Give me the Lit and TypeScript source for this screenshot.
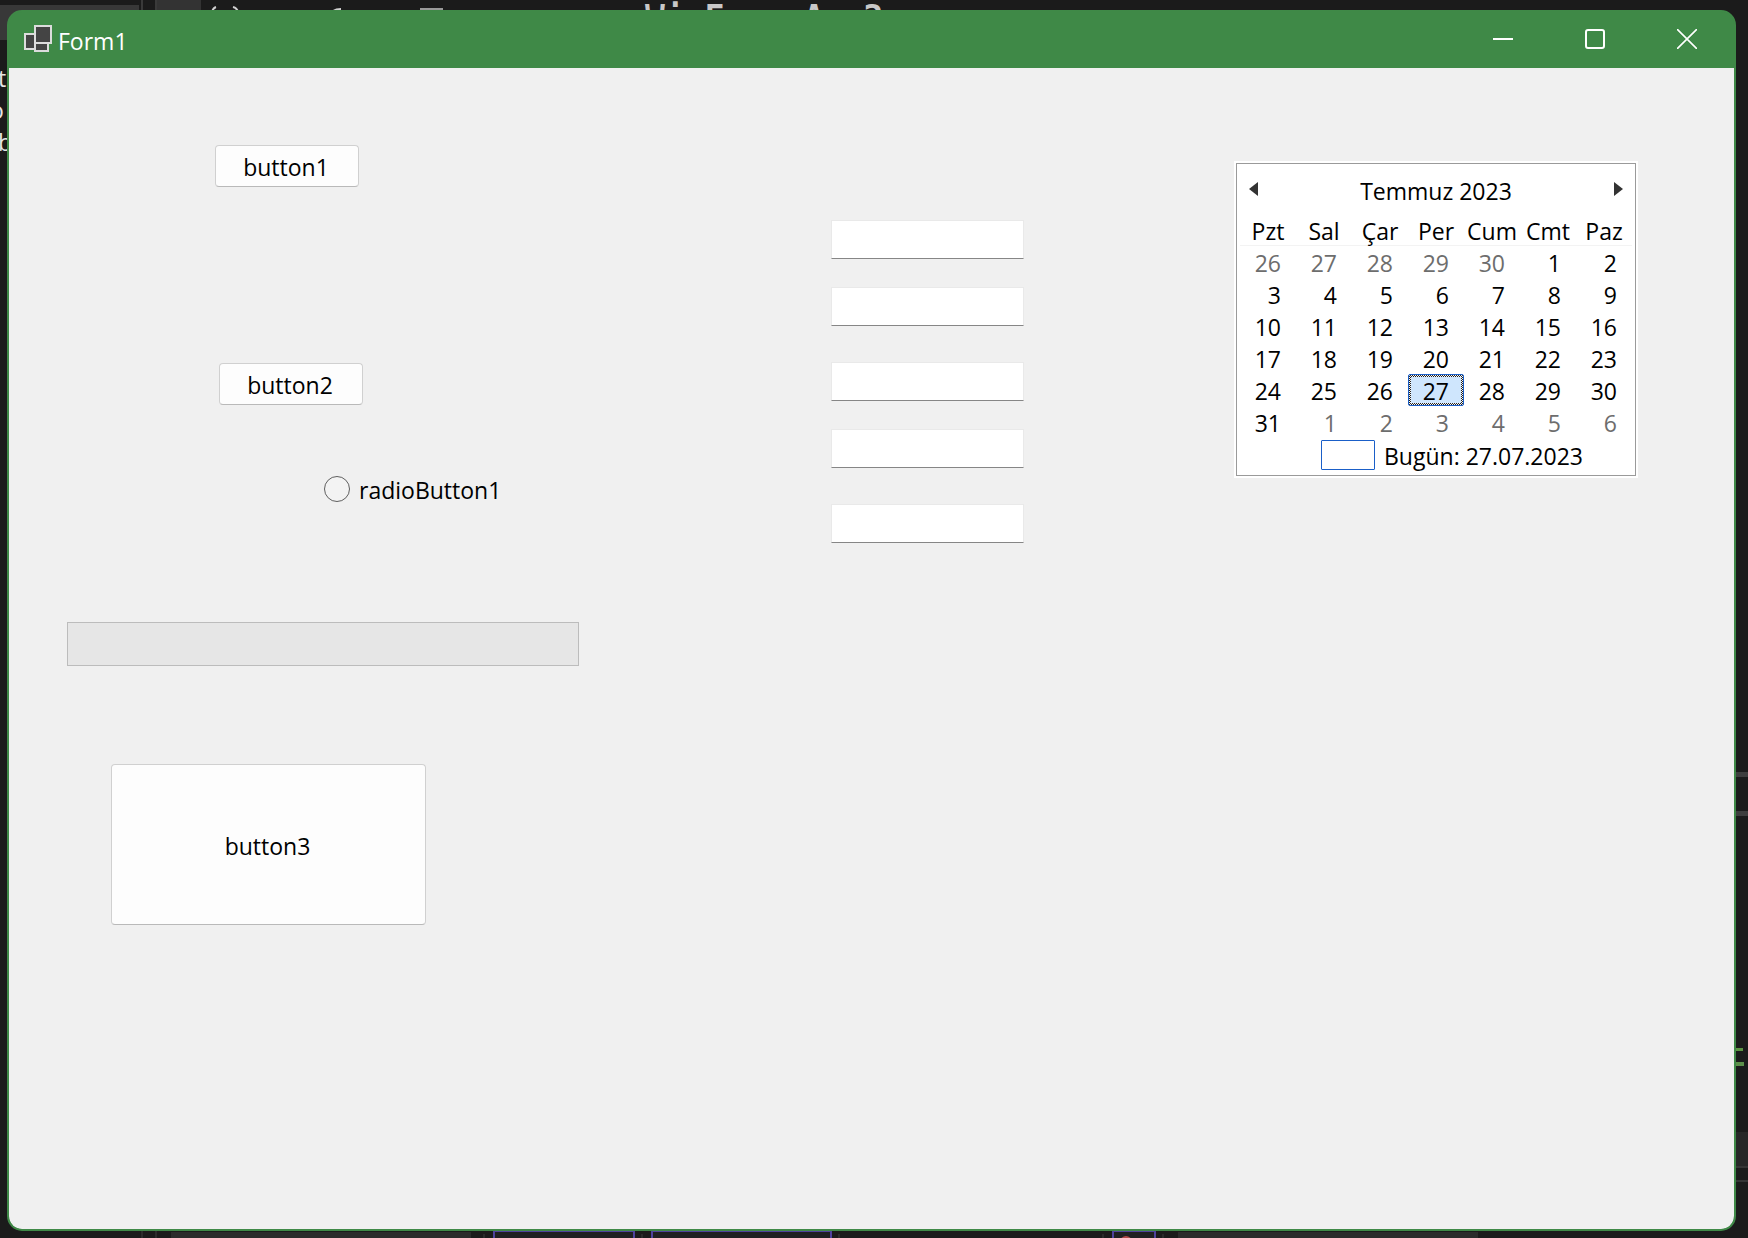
import { LitElement, html, css, svg } from "lit";
import { customElement, state } from "lit/decorators.js";
import { classMap } from "lit/directives/class-map.js";

const WEEKDAYS = ["Pzt", "Sal", "Çar", "Per", "Cum", "Cmt", "Paz"];

interface Day {
  day: number;
  outside: boolean;
}

/** Six weeks of July 2023, Monday first, padded with the neighbouring months. */
function buildWeeks(): Day[][] {
  const weeks: Day[][] = [];
  for (let w = 0; w < 6; w++) {
    const week: Day[] = [];
    for (let d = 0; d < 7; d++) {
      const date = new Date(2023, 5, 26 + w * 7 + d);
      week.push({ day: date.getDate(), outside: date.getMonth() !== 6 });
    }
    weeks.push(week);
  }
  return weeks;
}

@customElement("month-calendar")
class MonthCalendar extends LitElement {
  @state() private selected = 27;
  private weeks = buildWeeks();

  static styles = css`
    :host {
      display: block;
      background: #fff;
      padding: 2px;
    }
    button {
      font: inherit;
      color: inherit;
      background: none;
      border: 0;
      padding: 0;
      margin: 0;
    }
    .frame {
      box-sizing: border-box;
      width: 400px;
      border: 1px solid #9a9a9a;
      padding: 7px 3px 4px;
    }
    .head {
      box-sizing: border-box;
      display: flex;
      align-items: center;
      justify-content: space-between;
      height: 43px;
      padding: 0 9px 3px;
    }
    .arrow {
      display: flex;
      height: 28px;
      align-items: center;
    }
    .arrow svg {
      display: block;
      margin-bottom: 4px;
    }
    table {
      width: 392px;
      table-layout: fixed;
      border-collapse: collapse;
    }
    th,
    td {
      height: 32px;
      padding: 0;
      font-weight: 400;
    }
    th {
      box-sizing: border-box;
      padding-top: 2px;
      line-height: 30px;
      text-align: center;
      background: linear-gradient(#f3f3f3, #f3f3f3) bottom / 100% 1px no-repeat;
    }
    .day {
      display: block;
      box-sizing: border-box;
      width: 56px;
      height: 32px;
      line-height: 30px;
      padding: 2px 15px 0 0;
      text-align: right;
    }
    .outside {
      color: #6d6d6d;
    }
    .selected {
      line-height: 28px;
      padding-right: 14px;
      border: 1px solid #1a5fc8;
      border-radius: 2px;
      background:
        linear-gradient(#cfe6fd, #cfe6fd) center / calc(100% - 4px) calc(100% - 4px) no-repeat,
        repeating-conic-gradient(#222 0 25%, #f4f4f4 0 50%) 0 0 / 2px 2px;
    }
    .today {
      display: flex;
      align-items: center;
      gap: 9px;
      height: 33px;
      padding-top: 1px;
      line-height: 30px;
      margin-left: 81px;
    }
    .today-text {
      padding-top: 2px;
    }
    .mark {
      box-sizing: border-box;
      width: 54px;
      height: 30px;
      border: 1px solid #1a5fc8;
      border-radius: 1px;
    }
  `;

  render() {
    return html`
      <div class="frame">
        <div class="head">
          <button class="arrow" aria-label="Önceki ay">
            <svg width="9" height="14" viewBox="0 0 9 14"><path d="M9 0v14L0 7z" fill="#333" /></svg>
          </button>
          <span>Temmuz 2023</span>
          <button class="arrow" aria-label="Sonraki ay">
            <svg width="9" height="14" viewBox="0 0 9 14"><path d="M0 0v14l9-7z" fill="#333" /></svg>
          </button>
        </div>
        <table>
          <thead>
            <tr>${WEEKDAYS.map((name) => html`<th scope="col">${name}</th>`)}</tr>
          </thead>
          <tbody>
            ${this.weeks.map(
              (week) => html`<tr>
                ${week.map(
                  (d) => html`<td><button
                    class=${classMap({
                      day: true,
                      outside: d.outside,
                      selected: !d.outside && d.day === this.selected,
                    })}
                    @click=${() => { if (!d.outside) this.selected = d.day; }}
                  >${d.day}</button></td>`
                )}
              </tr>`
            )}
          </tbody>
        </table>
        <button class="today" @click=${() => (this.selected = 27)}>
          <span class="mark"></span><span class="today-text">Bugün: 27.07.2023</span>
        </button>
      </div>
    `;
  }
}

/** The slivers of the code editor that show around the form's edges. */
@customElement("editor-backdrop")
class EditorBackdrop extends LitElement {
  static styles = css`
    :host {
      position: absolute;
      inset: 0;
      overflow: hidden;
      background: #1b1b1b;
      color: #e6e6e6;
    }
    .art {
      position: absolute;
      inset: 0;
      width: 100%;
      height: 100%;
    }
    .caption {
      position: absolute;
      left: 645px;
      top: -1px;
      font: 700 33px/38px "DejaVu Sans Mono", monospace;
      color: #c8c8c8;
    }
    .menu {
      position: absolute;
      left: -10px;
      top: 62px;
      width: 24px;
      display: flex;
      flex-direction: column;
      align-items: flex-start;
      line-height: 32px;
    }
    .menu span {
      padding-left: 8px;
    }
    .menu .clipped {
      padding-left: 0;
    }
  `;

  render() {
    const boxes: [number, number, number, number, string][] = [
      [0, 5, 139, 35, "#383838"],
      [141, 0, 2, 10, "#3a3a3a"],
      [155, 0, 2, 10, "#3a3a3a"],
      [157, 0, 44, 10, "#333333"],
      [420, 8, 23, 3, "#9a9a9a"],
      [1735, 772, 13, 5, "#3e3e3e"],
      [1735, 811, 13, 5, "#3e3e3e"],
      [1735, 1048, 8, 3, "#5c9443"],
      [1735, 1062, 9, 4, "#5c8f4a"],
      [1735, 1132, 13, 34, "#272727"],
      [1735, 1166, 13, 2, "#353535"],
      [1735, 1180, 13, 2, "#353535"],
      [141, 1230, 2, 8, "#2c2c2c"],
      [155, 1230, 2, 8, "#2c2c2c"],
      [171, 1232, 300, 6, "#2b2b2b"],
      [483, 1234, 2, 4, "#2b2b2b"],
      [641, 1234, 2, 4, "#2b2b2b"],
      [838, 1234, 2, 4, "#2b2b2b"],
      [1102, 1234, 2, 4, "#2b2b2b"],
      [1162, 1234, 2, 4, "#2b2b2b"],
      [1178, 1232, 300, 6, "#2b2b2b"],
    ];
    const outlined = [[493, 142], [651, 181], [1112, 44]];
    return html`
      <svg class="art" viewBox="0 0 1748 1238" preserveAspectRatio="none" aria-hidden="true">
        ${boxes.map(([x, y, w, h, fill]) => svg`<rect x=${x} y=${y} width=${w} height=${h} fill=${fill} />`)}
        ${outlined.map(([x, w]) => svg`<rect x=${x + 1} y="1231" width=${w - 2} height="12" fill="#202022" stroke="#4f429c" stroke-width="2" />`)}
        <circle cx="1126" cy="1242" r="6" fill="#b04a4a" />
        <path d="M212 12q1-4 4-5M238 12q-1-4-5-5M333 11q3-2 8-2" fill="none" stroke="#d0d0d0" stroke-width="2" />
      </svg>
      <span class="caption" aria-hidden="true">WinFormsApp2</span>
      <div class="menu" aria-hidden="true"><span>t</span><span class="clipped">o</span><span>b</span></div>
    `;
  }
}

@customElement("app-root")
class AppRoot extends LitElement {
  static styles = css`
    :host {
      display: block;
      box-sizing: border-box;
      position: relative;
      min-height: 100vh;
      padding: 10px 12px 7px 7px;
      font-family: "Open Sans", "Noto Sans", sans-serif;
      font-size: 23px;
      color: #000;
    }
    button,
    input {
      font: inherit;
      color: inherit;
      margin: 0;
    }
    .window {
      position: relative;
      box-sizing: border-box;
      min-height: calc(100vh - 17px);
      display: flex;
      flex-direction: column;
      border: 2px solid #3f8947;
      border-radius: 15px;
      overflow: hidden;
      background: #3f8947;
    }
    .titlebar {
      display: flex;
      align-items: center;
      height: 56px;
      padding: 0 1px 0 15px;
      color: #fff;
    }
    .logo {
      width: 28px;
      height: 28px;
      margin: 0 6px 2px 0;
    }
    .title {
      flex: 1;
      font-size: 23px;
      font-weight: 400;
      margin: 0;
      padding-top: 1px;
    }
    .caption-button {
      display: flex;
      align-items: center;
      justify-content: center;
      width: 92px;
      height: 56px;
      padding: 0 0 2px;
      border: 0;
      background: none;
    }
    .client {
      flex: 1;
      display: grid;
      grid-template-columns: minmax(0, 822fr) minmax(0, 403fr) 500px;
      align-items: start;
      background: #f0f0f0;
      border-radius: 0 0 13px 13px;
    }
    .controls {
      display: flex;
      flex-direction: column;
      align-items: flex-start;
      padding-top: 77px;
    }
    .push {
      box-sizing: border-box;
      width: 144px;
      height: 42px;
      padding: 2px 2px 0 0;
      border: 1px solid #d0d0d0;
      border-bottom-color: #b9b9b9;
      border-radius: 4px;
      background: #fdfdfd;
    }
    .first {
      margin-left: 206px;
    }
    .second {
      margin: 176px 0 0 210px;
    }
    .big {
      width: 315px;
      height: 161px;
      margin: 98px 0 0 102px;
    }
    .choice {
      display: flex;
      align-items: center;
      gap: 9px;
      height: 30px;
      margin: 69px 0 0 315px;
    }
    .choice span {
      padding-top: 2px;
    }
    .choice input {
      appearance: none;
      box-sizing: border-box;
      width: 26px;
      height: 26px;
      border: 1px solid #5f5f5f;
      border-radius: 50%;
      background: #f3f3f3;
    }
    .choice input:checked {
      border: 7px solid #3f8947;
    }
    .progress {
      appearance: none;
      box-sizing: border-box;
      width: 512px;
      height: 44px;
      margin: 118px 0 0 58px;
      border: 1px solid #bcbcbc;
      background: #e6e6e6;
    }
    .progress::-webkit-progress-bar {
      background: #e6e6e6;
    }
    .fields {
      display: flex;
      flex-direction: column;
      align-items: flex-start;
      padding-top: 152px;
    }
    .field {
      box-sizing: border-box;
      width: 193px;
      height: 39px;
      padding: 0 6px;
      border: 1px solid #e9e9e9;
      border-bottom-color: #868686;
      background: #fff;
    }
    .field:nth-child(even) {
      margin-top: 28px;
    }
    .field:nth-child(odd):not(:first-child) {
      margin-top: 36px;
    }
    .schedule {
      padding: 93px 96px 0 0;
    }
  `;

  render() {
    return html`
      <editor-backdrop></editor-backdrop>
      <main class="window">
        <header class="titlebar">
          <svg class="logo" viewBox="0 0 28 28" aria-hidden="true">
            <g fill="#444" stroke="#dcdcdc" stroke-width="2">
              <rect x="1" y="9" width="11" height="15" />
              <rect x="11" y="18" width="13" height="8" />
              <rect x="11" y="1" width="16" height="17" />
            </g>
          </svg>
          <h1 class="title">Form1</h1>
          <button class="caption-button" aria-label="Simge durumuna küçült">
            <svg width="20" height="20" viewBox="0 0 20 20"><path d="M0 10h20" stroke="#fff" stroke-width="2" /></svg>
          </button>
          <button class="caption-button" aria-label="Ekranı kapla">
            <svg width="20" height="20" viewBox="0 0 20 20"><rect x="1" y="1" width="18" height="18" rx="2" fill="none" stroke="#fff" stroke-width="2" /></svg>
          </button>
          <button class="caption-button" aria-label="Kapat">
            <svg width="20" height="20" viewBox="0 0 20 20"><path d="M0 0l20 20M20 0L0 20" stroke="#fff" stroke-width="1.6" /></svg>
          </button>
        </header>
        <div class="client">
          <section class="controls">
            <button class="push first">button1</button>
            <button class="push second">button2</button>
            <label class="choice"><input type="radio" name="option" /><span>radioButton1</span></label>
            <progress class="progress" value="0" max="100" aria-label="progressBar1"></progress>
            <button class="push big">button3</button>
          </section>
          <section class="fields">
            ${[1, 2, 3, 4, 5].map((n) => html`<input class="field" type="text" aria-label=${`textBox${n}`} />`)}
          </section>
          <section class="schedule"><month-calendar></month-calendar></section>
        </div>
      </main>
    `;
  }
}
